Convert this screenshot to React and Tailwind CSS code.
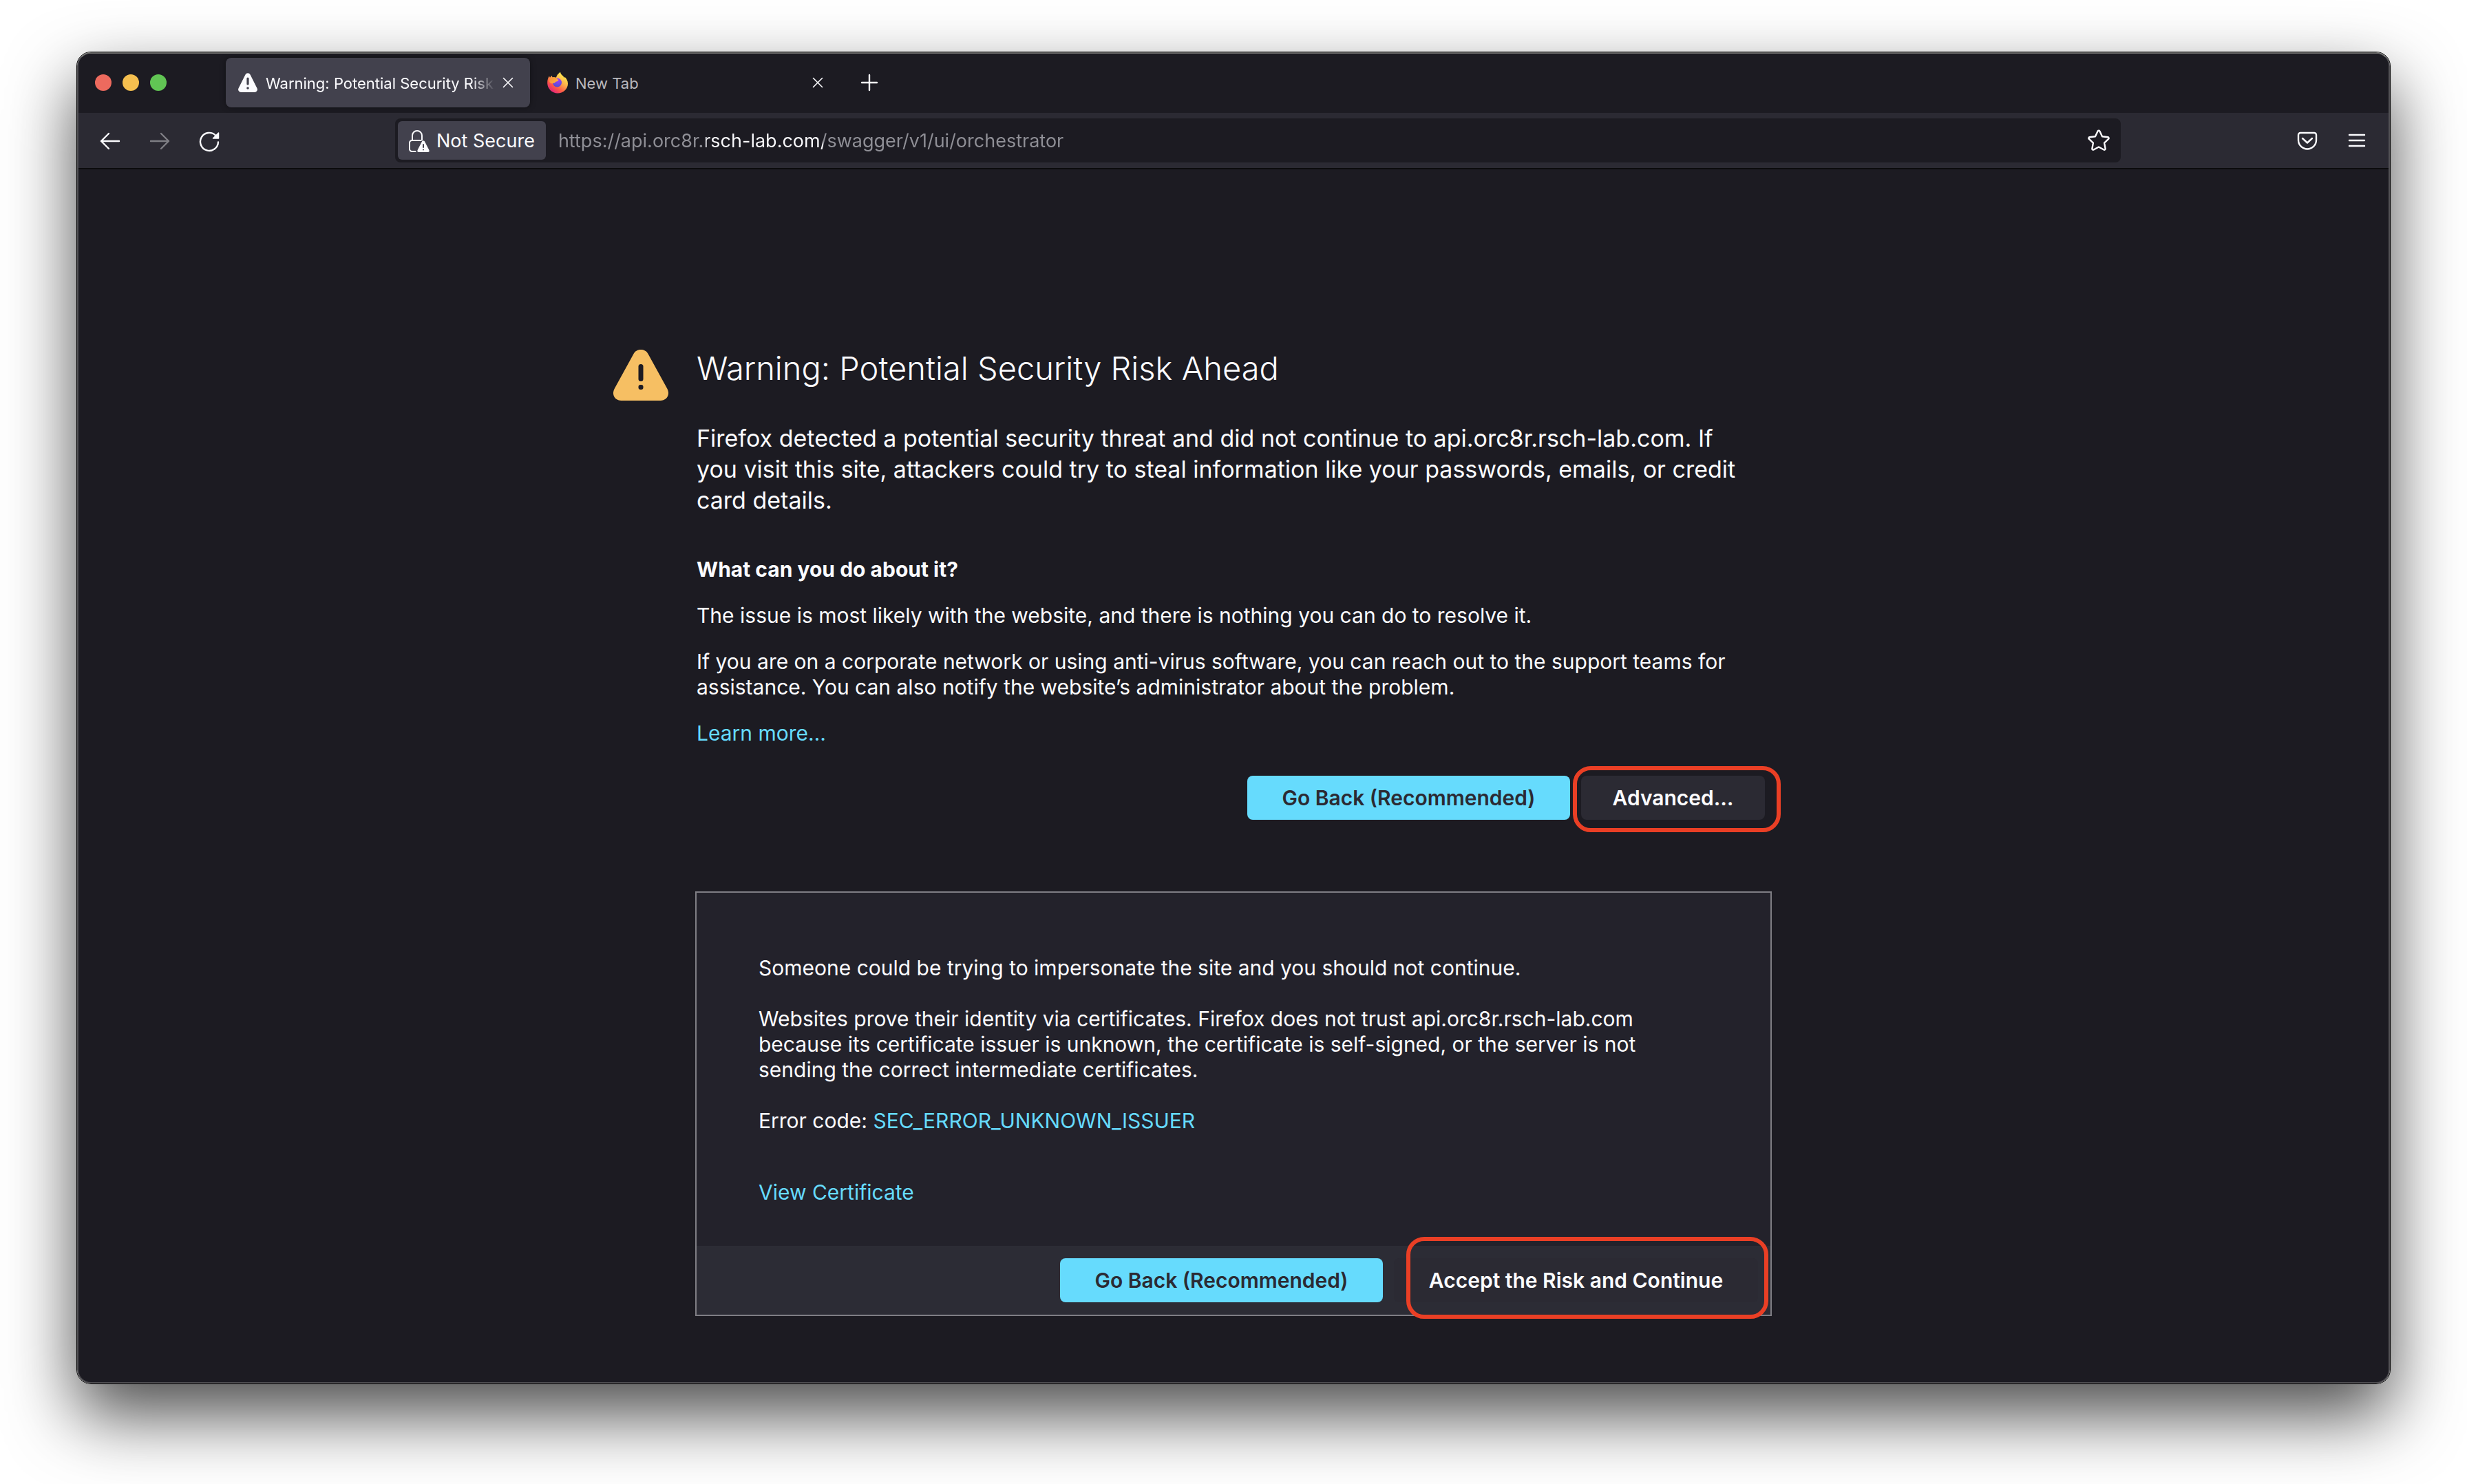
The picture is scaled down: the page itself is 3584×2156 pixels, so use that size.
const WARNING_PATH =
  "M14.742 12.106 9.789 2.2a2 2 0 0 0-3.578 0l-4.953 9.91A2 2 0 0 0 3.047 15h9.905a2 2 0 0 0 1.79-2.894zM7.2 5a.8.8 0 0 1 1.6 0v4a.8.8 0 0 1-1.6 0zM8 12.9a.9.9 0 1 1 0-1.8.9.9 0 0 1 0 1.8z";

function WarningIcon() {
  return (
    <svg viewBox="0 0 16 16" className="size-8 shrink-0 fill-[#fbfbfe]" aria-hidden="true">
      <path fillRule="evenodd" d={WARNING_PATH} />
    </svg>
  );
}

function BigWarningIcon() {
  return (
    <svg viewBox="0 0 80 74" className="w-20" aria-hidden="true">
      <path
        fill="#f6bf63"
        d="M40 0c5 0 8.500 2 11 7L78.500 57c4.500 9-1.500 17-10 17H11.500c-8.500 0-14.500-8-10-17L29 7c2.500-5 6-7 11-7z"
      />
      <rect x="36.500" y="21" width="7" height="25" rx="3.500" fill="#1c1b22" />
      <rect x="36.500" y="51" width="7" height="7" rx="3" fill="#1c1b22" />
    </svg>
  );
}

function FirefoxLogo() {
  return (
    <svg viewBox="0 0 32 32" className="size-8 shrink-0" aria-hidden="true">
      <defs>
        <linearGradient id="ff-body" x1="0.85" y1="0.1" x2="0.25" y2="0.95">
          <stop offset="0" stopColor="#fff44f" />
          <stop offset="0.4" stopColor="#ffb04a" />
          <stop offset="0.72" stopColor="#ff5a46" />
          <stop offset="1" stopColor="#e3257a" />
        </linearGradient>
        <linearGradient id="ff-head" x1="0" y1="0" x2="1" y2="0.6">
          <stop offset="0" stopColor="#f98a3a" />
          <stop offset="1" stopColor="#ffb03c" />
        </linearGradient>
        <radialGradient id="ff-globe" cx="0.6" cy="0.2" r="0.9">
          <stop offset="0" stopColor="#a63af5" />
          <stop offset="0.6" stopColor="#6a4be0" />
          <stop offset="1" stopColor="#4a4ac8" />
        </radialGradient>
      </defs>
      <path
        fill="url(#ff-body)"
        d="M1.200 17C1 12 2.500 8.500 4 6.500c.3 1 .5 1.500 1 2.200C6 7.500 7 6.500 8 6c0 1.200.2 2 .8 2.600 1.600-.6 3.500-.3 5.200.2C14.500 5.500 17 3 20 .5c.3 2.500 1.800 4 3.800 5.700 1 .9 1.700 2 2 3.300.4-.6.5-1.200.4-2C29 10 31 13.500 31 17.500 31 25.500 24 31.500 16 31.500S1.500 25 1.200 17z"
      />
      <circle cx="15.500" cy="16" r="6.500" fill="url(#ff-globe)" />
      <path
        fill="url(#ff-head)"
        d="M4 13c.5-2.500 2.500-4.300 4.800-4.400 1.600-.6 3.700-.2 5.200.4 1 .7 1 1.700 2.200 2.300.8.500 1.300 1 .9 1.700-.5 1-2.300 1.200-3.600 1.800-.8.400-1 1-1.300 1.700-1.200-.2-2.400 0-3.200.8C6.500 17.500 4 16.500 4 13z"
      />
    </svg>
  );
}

function CloseIcon() {
  return (
    <svg viewBox="0 0 16 16" className="size-4" fill="none" stroke="#fbfbfe" strokeWidth="1.600" strokeLinecap="round" aria-hidden="true">
      <path d="M1.500 1.500 14.500 14.500M14.500 1.500 1.500 14.500" />
    </svg>
  );
}

function Stroke({ children, width = 2.4 }) {
  return (
    <svg
      viewBox="0 0 32 32"
      className="size-8"
      fill="none"
      stroke="#fbfbfe"
      strokeWidth={width}
      strokeLinecap="round"
      strokeLinejoin="round"
      aria-hidden="true"
    >
      {children}
    </svg>
  );
}

function LockWarningIcon() {
  return (
    <svg viewBox="0 0 32 32" className="size-8" fill="none" stroke="#fbfbfe" strokeWidth="2" strokeLinecap="round" aria-hidden="true">
      <path d="M5 14.500V8a7 7 0 0 1 14 0v6.500" />
      <path d="M17.500 15H4.500A3.500 3.500 0 0 0 1 18.500v9A3.500 3.500 0 0 0 4.500 31H9.500" />
      <path
        fill="#fbfbfe"
        stroke="none"
        d="M21 15.500c1 0 1.700.5 2.200 1.400l6.200 12c.8 1.600-.2 3.100-1.800 3.100H14.400c-1.600 0-2.600-1.500-1.800-3.100l6.200-12c.5-.9 1.200-1.400 2.200-1.400z"
      />
      <path d="M21 21v4M21 28.500v.1" stroke="#42414d" />
    </svg>
  );
}

function Tab({ icon, title, active }) {
  return (
    <div
      role="tab"
      aria-selected={active}
      className={
        "flex h-full w-[442px] items-center gap-2.5 rounded-lg pr-6 pl-4 " +
        (active ? "bg-[#42414d] text-[#fbfbfe] shadow-[0_0_8px_rgba(0,0,0,0.4)]" : "text-[#b9b8bd]")
      }
    >
      {icon}
      <span
        className={
          "min-w-0 flex-1 pt-0.5 text-[22px] leading-8 whitespace-nowrap " +
          (active ? "[mask-image:linear-gradient(to_left,transparent,black_36px)]" : "")
        }
      >
        {title}
      </span>
      <button type="button" aria-label={"Close " + title}>
        <CloseIcon />
      </button>
    </div>
  );
}

function PrimaryButton() {
  return (
    <button
      type="button"
      className="h-16 min-w-[469px] rounded-lg bg-[#66dbfd] px-12 text-[30px] font-semibold whitespace-nowrap text-[#2b2a33]"
    >
      Go Back (Recommended)
    </button>
  );
}

function TitleBar() {
  return (
    <header className="flex h-[86px] items-center bg-[#1c1b22] pt-1.5 pb-2 pl-6">
      <div className="mr-[86px] flex gap-4">
        <button type="button" aria-label="Close window" className="size-6 rounded-full bg-[#ed6a5e]" />
        <button type="button" aria-label="Minimize window" className="size-6 rounded-full bg-[#f5bf4f]" />
        <button type="button" aria-label="Zoom window" className="size-6 rounded-full bg-[#61c554]" />
      </div>
      <div role="tablist" className="flex h-full gap-2">
        <Tab active icon={<WarningIcon />} title="Warning: Potential Security Risk" />
        <Tab active={false} icon={<FirefoxLogo />} title="New Tab" />
      </div>
      <button type="button" aria-label="New tab" className="ml-[27px]">
        <Stroke>
          <path d="M16 5v22M5 16h22" />
        </Stroke>
      </button>
    </header>
  );
}

function Toolbar() {
  return (
    <nav className="flex h-[82px] items-center border-b-2 border-[#0c0c0d] bg-[#2b2a33]">
      <div className="flex w-[460px] shrink-0 gap-10 pt-0.5 pl-[30px]">
        <button type="button" aria-label="Back">
          <Stroke>
            <path d="M29 16H3M14 5 3 16l11 11" />
          </Stroke>
        </button>
        <button type="button" aria-label="Forward" disabled className="opacity-40">
          <Stroke>
            <path d="M3 16h26M18 5l11 11-11 11" />
          </Stroke>
        </button>
        <button type="button" aria-label="Reload">
          <Stroke>
            <path d="M29 17.500A13 13 0 1 1 25 7.500" />
            <path d="M29.500 4v8h-8z" fill="#fbfbfe" strokeWidth="1.500" />
          </Stroke>
        </button>
      </div>
      <div className="flex h-16 min-w-0 flex-1 items-center rounded-lg bg-[#1c1b22] pr-4 pl-1">
        <button
          type="button"
          className="flex h-14 items-center gap-2 rounded-md bg-[#42414d] px-4 pt-0.5 text-[27px] whitespace-nowrap text-[#fbfbfe]"
        >
          <LockWarningIcon />
          Not Secure
        </button>
        <input
          type="text"
          aria-label="Address"
          defaultValue="https://api.orc8r.rsch-lab.com/swagger/v1/ui/orchestrator"
          className="ml-[18px] min-w-0 flex-1 bg-[linear-gradient(to_right,#8f8f96_215px,#fbfbfe_215px,#fbfbfe_385px,#8f8f96_385px)] bg-clip-text pt-0.5 text-[27px] text-transparent outline-none"
        />
        <button type="button" aria-label="Bookmark this page">
          <Stroke>
            <path d="M14.600 2.600a1.600 1.600 0 0 1 2.800 0l3.600 7.600 8.300 1.100a1.500 1.500 0 0 1 .8 2.600l-6 5.700 1.500 8.300a1.500 1.500 0 0 1-2.200 1.600L16 25.500l-7.400 4a1.500 1.500 0 0 1-2.200-1.600l1.500-8.300-6-5.700a1.500 1.500 0 0 1 .8-2.600l8.300-1.100z" />
          </Stroke>
        </button>
      </div>
      <div className="flex w-[389px] shrink-0 justify-end gap-10 pt-0.5 pr-[30px]">
        <button type="button" aria-label="Save to Pocket">
          <Stroke>
            <path d="M6 4h20a3 3 0 0 1 3 3v7.500a13 13 0 0 1-26 0V7a3 3 0 0 1 3-3z" />
            <path d="m9 12 7 6.500 7-6.500" />
          </Stroke>
        </button>
        <button type="button" aria-label="Open application menu">
          <Stroke>
            <path d="M5 7h22M5 15h22M5 23h22" />
          </Stroke>
        </button>
      </div>
    </nav>
  );
}

function CertificatePanel() {
  return (
    <section className="mt-[104px] border-2 border-[#7f7e84] bg-[#23222b]">
      <div className="flex flex-col items-start gap-[37px] px-[90px] pt-[91px] pb-[59px]">
        <p>Someone could be trying to impersonate the site and you should not continue.</p>
        <p>
          Websites prove their identity via certificates. Firefox does not trust api.orc8r.rsch-lab.com
          <br />
          because its certificate issuer is unknown, the certificate is self-signed, or the server is not
          <br />
          sending the correct intermediate certificates.
        </p>
        <p>
          Error code:{" "}
          <a href="#error-code" className="text-[#66dbfd]">
            SEC_ERROR_UNKNOWN_ISSUER
          </a>
        </p>
        <a href="#certificate" className="mt-[30px] text-[#66dbfd]">
          View Certificate
        </a>
      </div>
      <div className="flex justify-end gap-4 bg-[#2c2c35] p-[18px]">
        <PrimaryButton />
        <div className="relative">
          <button
            type="button"
            className="h-16 min-w-[529px] rounded-lg bg-[#2b2a33] px-12 text-[30px] font-semibold whitespace-nowrap"
          >
            Accept the Risk and Continue
          </button>
          <div className="pointer-events-none absolute -top-[31px] -right-[15px] -bottom-6 left-[18px] rounded-[26px] border-6 border-[#ea3f25]" />
        </div>
      </div>
    </section>
  );
}

function ErrorPage() {
  return (
    <main className="grid flex-1 grid-cols-[1fr_minmax(0,1564px)_1fr] content-start pt-[258px] pb-24 text-[30px] leading-[37px]">
      <div className="mt-1 mr-[39px] justify-self-end">
        <BigWarningIcon />
      </div>
      <div>
        <div className="pl-0.5">
          <h1 className="text-[47px] leading-[62px] font-light">Warning: Potential Security Risk Ahead</h1>
          <p className="mt-12 text-[34px] leading-[45px]">
            Firefox detected a potential security threat and did not continue to api.orc8r.rsch-lab.com. If
            <br />
            you visit this site, attackers could try to steal information like your passwords, emails, or credit
            <br />
            card details.
          </p>
          <div className="mt-[60px] flex flex-col items-start gap-[30px]">
            <h2 className="font-bold">What can you do about it?</h2>
            <p>The issue is most likely with the website, and there is nothing you can do to resolve it.</p>
            <p>
              If you are on a corporate network or using anti-virus software, you can reach out to the support teams for
              <br />
              assistance. You can also notify the website’s administrator about the problem.
            </p>
            <a href="#learn-more" className="text-[#66dbfd]">
              Learn more…
            </a>
          </div>
        </div>
        <div className="mt-[43px] flex justify-end gap-4 pr-2.5">
          <PrimaryButton />
          <div className="relative">
            <button
              type="button"
              className="h-16 min-w-[267px] rounded-lg bg-[#2b2a33] px-10 text-[30px] font-semibold whitespace-nowrap"
            >
              Advanced…
            </button>
            <div className="pointer-events-none absolute -top-3.5 -right-[23px] -bottom-[18px] -left-3 rounded-[26px] border-6 border-[#ea3f25]" />
          </div>
        </div>
        <CertificatePanel />
      </div>
    </main>
  );
}

export default function App() {
  return (
    <div className="flex min-h-screen flex-col bg-white px-[111px] pt-[75px] pb-[147px] font-['Inter','Liberation_Sans',sans-serif]">
      <div className="flex flex-1 flex-col rounded-[21px] border border-black shadow-[0_45px_100px_rgba(0,0,0,0.7)]">
        <div className="flex flex-1 flex-col overflow-hidden rounded-[20px] border-2 border-[#4f4e52] border-t-[#6d6d6c] bg-[#1c1b22] text-[#fbfbfe]">
          <TitleBar />
          <Toolbar />
          <ErrorPage />
        </div>
      </div>
    </div>
  );
}
